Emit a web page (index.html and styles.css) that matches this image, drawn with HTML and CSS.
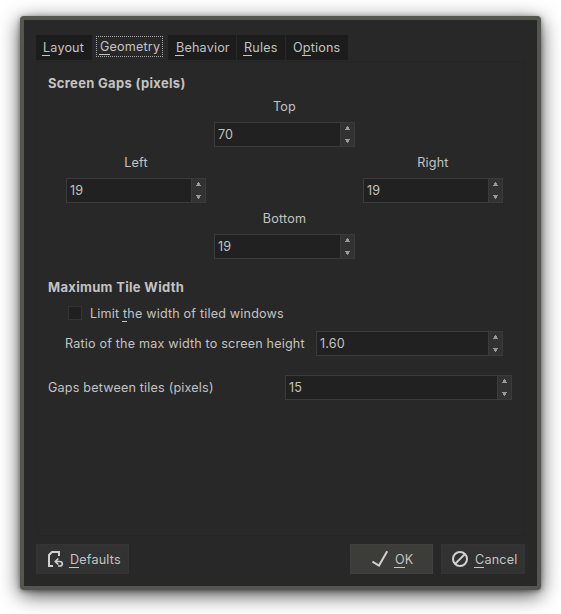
FILE: index.html
```html
<!DOCTYPE html>
<html lang="en">
<head>
<meta charset="utf-8">
<title>Tiling settings</title>
<link rel="stylesheet" href="styles.css">
</head>
<body>
<svg class="defs" width="0" height="0">
  <symbol id="arrows" viewBox="0 0 13 23">
    <path d="M6 3h1v1h1v2h1v1H4V6h1V4h1z" fill="#999"/>
    <path d="M4 16h5v1h-1v2H7v1H6v-1H5v-2H4z" fill="#999"/>
  </symbol>
</svg>
<main class="window">
  <nav class="tabs">
    <span class="tab layout"><u>L</u>ayout</span>
    <span class="tab active"><span class="focus"><u>G</u>eometry</span></span>
    <span class="tab behavior"><u>B</u>ehavior</span>
    <span class="tab rules"><u>R</u>ules</span>
    <span class="tab options">O<u>p</u>tions</span>
  </nav>
  <section class="panel">
    <h2>Screen Gaps (pixels)</h2>
    <div class="gaps">
      <label class="gap top"><span>Top</span><span class="spin"><span class="value">70</span><svg><use href="#arrows"/></svg></span></label>
      <label class="gap left"><span>Left</span><span class="spin"><span class="value">19</span><svg><use href="#arrows"/></svg></span></label>
      <label class="gap right"><span>Right</span><span class="spin"><span class="value">19</span><svg><use href="#arrows"/></svg></span></label>
      <label class="gap bottom"><span>Bottom</span><span class="spin"><span class="value">19</span><svg><use href="#arrows"/></svg></span></label>
    </div>
    <h2 class="second">Maximum Tile Width</h2>
    <label class="check"><span class="box"></span><span class="check-text">Limit <u>t</u>he width of tiled windows</span></label>
    <label class="row ratio"><span class="row-text">Ratio of the max width to screen height</span><span class="spin"><span class="value">1.60</span><svg><use href="#arrows"/></svg></span></label>
    <label class="row between"><span class="row-text">Gaps between tiles (pixels)</span><span class="spin"><span class="value">15</span><svg><use href="#arrows"/></svg></span></label>
  </section>
  <footer class="actions">
    <span class="button defaults">
      <svg width="18" height="18" viewBox="0 0 18 18" fill="none" stroke="#d0d0d0" stroke-width="2"><path d="M13 6V2H6L3 5V16H7"/><path d="M9 11.5h4.5q2.8 0 2.8 2.3T13.5 16H12M12.3 8.5l-3 3 3 3" stroke-width="1.7"/></svg>
      <span><u>D</u>efaults</span></span>
    <span class="button ok">
      <svg width="18" height="18" viewBox="0 0 18 18" fill="none" stroke="#d0d0d0" stroke-width="2"><path d="M1.4 11.7L8 15.6L16.2 1.3"/></svg>
      <span><u>O</u>K</span></span>
    <span class="button cancel">
      <svg width="18" height="18" viewBox="0 0 18 18" fill="none" stroke="#d0d0d0" stroke-width="2"><circle cx="9" cy="9" r="7"/><path d="M4 14L14 4"/></svg>
      <span><u>C</u>ancel</span></span>
  </footer>
</main>
</body>
</html>
```
FILE: styles.css
```css
* { box-sizing: border-box; }
body {
  margin: 0;
  padding: 16px 20px 0;
  height: 614px;
  overflow: hidden;
  background: #fff;
  color: #c3c3c3;
  font: 12.6px/18px Inter, sans-serif;
  letter-spacing: 0.18px;
  white-space: nowrap;
}
.defs { position: absolute; }
.window {
  width: 521px;
  height: 574px;
  padding: 15px 12px 0;
  border: 4px solid #545750;
  border-radius: 4px;
  background: #282828;
  box-shadow: 0 5px 20px rgba(0, 0, 0, 0.7), 0 1px 5px rgba(0, 0, 0, 0.4);
}
u { position: relative; text-decoration: none; }
u::after {
  content: "";
  position: absolute;
  left: -1px;
  right: 0;
  bottom: -1px;
  height: 1px;
  background: #c6c6c6;
}
.tabs { display: flex; height: 25px; }
.tab { background: #1c1c1c; padding: 4px 0 0 7px; }
.layout { width: 56px; }
.active { width: 76px; padding: 1px 4px 0; background: none; }
.focus {
  display: block;
  width: 67px;
  height: 21px;
  padding: 1px 0 0 3px;
  border: 1px dotted #aaa;
}
.behavior { width: 68px; margin-right: 1px; padding-left: 8px; }
.rules { width: 48px; margin-right: 1px; padding-left: 7px; }
.options { width: 62px; padding-left: 7px; }
.panel {
  height: 475px;
  margin-top: 1px;
  padding: 12px 11px 0;
  border: 1px solid #252525;
}
h2 { margin: 0; font-size: 13px; line-height: 18px; font-weight: 700; letter-spacing: 0.32px; }
.gaps {
  display: grid;
  grid-template-columns: 140px 140px;
  grid-template-rows: 56px 56px 56px;
  justify-content: space-between;
  width: 437px;
  margin: 6px 0 0 18px;
}
.gap { display: grid; grid-template-rows: 24px 25px; text-align: center; }
.top, .bottom { grid-column: 1 / 3; width: 141px; margin-left: 148px; }
.spin {
  display: grid;
  grid-template-columns: 1fr 14px;
  height: 25px;
  border: 1px solid #3b3b3b;
  background: #212121;
  text-align: left;
}
.spin svg { width: 14px; height: 23px; border-left: 1px solid #3b3b3b; background: #323232; }
.value { padding: 3px 0 0 3px; }
.second { margin-top: 12px; }
.check { display: flex; align-items: center; height: 18px; margin: 8px 0 0 20px; }
.box { width: 14px; height: 14px; margin-right: 8px; border: 1px solid #343434; background: #202020; }
.check-text, .row-text { padding-top: 1px; }
.row { display: flex; align-items: center; height: 25px; }
.row .spin { flex: none; margin-left: auto; }
.ratio { width: 438px; margin: 9px 0 0 17px; }
.ratio .spin { width: 187px; }
.between { width: 464px; margin-top: 19px; }
.between .spin { width: 227px; }
.actions { display: flex; margin-top: 8px; }
.button {
  display: flex;
  align-items: center;
  height: 30px;
  padding-left: 9px;
  gap: 6px;
  border: 1px solid #343434;
  background: #323232;
}
.button > span { padding-top: 2px; }
.defaults { width: 93px; }
.ok { width: 83px; margin-left: auto; padding-left: 20px; border-color: #41413e; background: #3c3c39; }
.cancel { width: 84px; margin-left: 8px; }
```
